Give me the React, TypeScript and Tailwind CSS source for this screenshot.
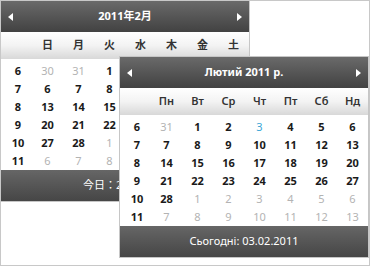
import React from "react";

type Day = { d: number; other?: boolean; today?: boolean };
type Week = { n: number; days: Day[] };

interface CalendarProps {
  title: string;
  dayNames: string[];
  weeks: Week[];
  footer: string;
  // the back calendar is partly covered: only draw what shows
  covered?: boolean;
}

const Arrow = ({ dir }: { dir: "left" | "right" }) => (
  <svg width="5" height="8" viewBox="0 0 5 8" className="block">
    {dir === "left" ? (
      <polygon points="5,0 5,8 0,4" fill="#ffffff" />
    ) : (
      <polygon points="0,0 0,8 5,4" fill="#ffffff" />
    )}
  </svg>
);

const Calendar = ({ title, dayNames, weeks, footer, covered = false }: CalendarProps) => {
  const shownCols = covered ? 3 : 7;
  return (
    <div className="w-[250px] border border-[#c6c6c6] bg-white">
      {/* header */}
      <div className="h-[31px] flex items-center justify-between px-[7px] bg-gradient-to-b from-[#6a6a6a] to-[#424242]">
        <Arrow dir="left" />
        <span className="text-white font-bold text-[11px]">{title}</span>
        <Arrow dir="right" />
      </div>

      {/* day names */}
      <div className="h-[27px] grid grid-cols-[31px_repeat(7,31px)] items-center bg-gradient-to-b from-[#ffffff] via-[#f3f3f3] to-[#d8d8d8]">
        <span />
        {dayNames.map((name) => (
          <span key={name} className="text-center font-semibold text-[11px] text-[#333333]">
            {name}
          </span>
        ))}
      </div>

      {/* weeks */}
      <div className="pt-[3px]">
        {weeks.map((week) => (
          <div key={week.n} className="h-[18px] grid grid-cols-[31px_repeat(7,31px)] items-center text-[11px]">
            <span className="text-center pl-[3px] font-bold text-[#1a1a1a]">{week.n}</span>
            {week.days.map((day, i) =>
              i < shownCols ? (
                <span
                  key={i}
                  className={
                    day.today
                      ? "text-center text-[#3aa6d6]"
                      : day.other
                      ? "text-center text-[#b3b3b3]"
                      : "text-center font-bold text-[#1a1a1a]"
                  }
                >
                  {day.d}
                </span>
              ) : (
                <span key={i} />
              )
            )}
          </div>
        ))}
      </div>

      {/* footer */}
      {covered ? (
        <div className="h-[31px] flex items-center pl-[82px] bg-gradient-to-b from-[#666666] to-[#464646]">
          <span className="w-[36px] overflow-hidden text-white text-[11px] whitespace-nowrap">{footer}</span>
        </div>
      ) : (
        <div className="h-[31px] flex items-center justify-center bg-gradient-to-b from-[#666666] to-[#464646]">
          <span className="text-white text-[11px] whitespace-nowrap">{footer}</span>
        </div>
      )}
    </div>
  );
};

const mk = (list: (number | string)[]): Day[] =>
  list.map((v) => {
    if (typeof v === "number") return { d: v };
    if (v.endsWith("t")) return { d: parseInt(v), today: true };
    return { d: parseInt(v), other: true };
  });

const jaWeeks: Week[] = [
  { n: 6, days: mk(["30o", "31o", 1, 2, 3, 4, 5]) },
  { n: 7, days: mk([6, 7, 8, 9, 10, 11, 12]) },
  { n: 8, days: mk([13, 14, 15, 16, 17, 18, 19]) },
  { n: 9, days: mk([20, 21, 22, 23, 24, 25, 26]) },
  { n: 10, days: mk([27, 28, "1o", "2o", "3o", "4o", "5o"]) },
  { n: 11, days: mk(["6o", "7o", "8o", "9o", "10o", "11o", "12o"]) },
];

const ukWeeks: Week[] = [
  { n: 6, days: mk(["31o", 1, 2, "3t", 4, 5, 6]) },
  { n: 7, days: mk([7, 8, 9, 10, 11, 12, 13]) },
  { n: 8, days: mk([14, 15, 16, 17, 18, 19, 20]) },
  { n: 9, days: mk([21, 22, 23, 24, 25, 26, 27]) },
  { n: 10, days: mk([28, "1o", "2o", "3o", "4o", "5o", "6o"]) },
  { n: 11, days: mk(["7o", "8o", "9o", "10o", "11o", "12o", "13o"]) },
];

export default function App() {
  return (
    <div
      className="relative w-[370px] h-[266px] border border-[#c8c8c8] bg-white overflow-hidden"
      style={{ fontFamily: '"Noto Sans", "Noto Sans CJK JP", sans-serif' }}
    >
      <div className="-ml-px -mt-px">
        <Calendar
          title="2011年2月"
          dayNames={["日", "月", "火", "水", "木", "金", "土"]}
          weeks={jaWeeks}
          footer="今日：2011/2/3"
          covered
        />
      </div>
      <div className="absolute left-[118px] top-[55px]">
        <Calendar
          title="Лютий 2011 р."
          dayNames={["Пн", "Вт", "Ср", "Чт", "Пт", "Сб", "Нд"]}
          weeks={ukWeeks}
          footer="Сьогодні: 03.02.2011"
        />
      </div>
    </div>
  );
}
